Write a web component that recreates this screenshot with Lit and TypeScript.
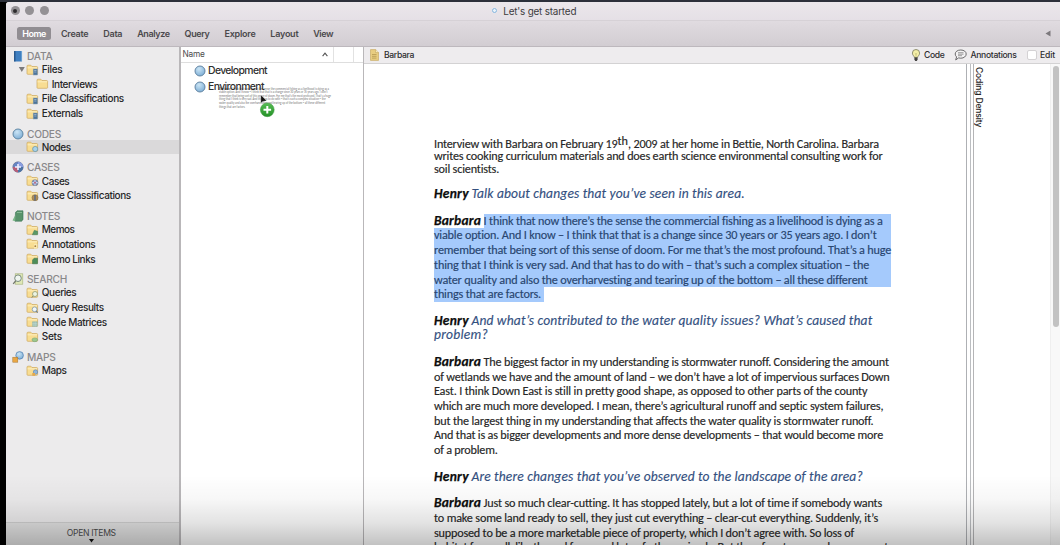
import { LitElement, html, css, svg, nothing } from "lit";
import { customElement, property } from "lit/decorators.js";

/** Text run tracked so that it spans exactly `w` pixels. */
@customElement("fit-text")
class FitText extends LitElement {
  @property({ type: Number }) w = 0;
  @property() text = "";
  static styles = css`
    :host { display: inline-block; white-space: pre; flex: none; }
    .run { display: inline-block; white-space: pre; }
  `;
  render() { return html`<span class="run">${this.text}</span>`; }
  updated() {
    const run = this.renderRoot.querySelector(".run") as HTMLElement;
    if (!this.w || !run) return;
    run.style.letterSpacing = "0px";
    const natural = parseFloat(getComputedStyle(run).width);
    run.style.letterSpacing = (this.w - natural) / this.text.length + "px";
  }
}

type Kind = "plain" | "name" | "ask";
interface Seg { k: Kind; t: string; w: number; sup?: boolean }
interface Para { cls: string; lines: Seg[][] }
const s = (t: string, w: number): Seg => ({ k: "plain", t, w });
const q = (t: string, w: number): Seg => ({ k: "ask", t, w });
const henry: Seg = { k: "name", t: "Henry", w: 34.8 };
const barbara: Seg = { k: "name", t: "Barbara", w: 47 };

const selected: Seg[][] = [
  [barbara, s("I think that now there’s the sense the commercial fishing as a livelihood is dying as a", 399)],
  [s("viable option. And I know – I think that that is a change since 30 years or 35 years ago. I don’t", 442.5)],
  [s("remember that being sort of this sense of doom. For me that’s the most profound. That’s a huge", 457)],
  [s("thing that I think is very sad. And that has to do with – that’s such a complex situation – the", 435)],
  [s("water quality and also the overharvesting and tearing up of the bottom – all these different", 433)],
  [s("things that are factors.", 107)],
];

const paras: Para[] = [
  { cls: "intro", lines: [
    [s("Interview with Barbara on February 19", 183.5), { k: "plain", t: "th", w: 10.5, sup: true }, s(", 2009 at her home in Bettie, North Carolina. Barbara", 250.5)],
    [s("writes cooking curriculum materials and does earth science environmental consulting work for", 448.5)],
    [s("soil scientists.", 65)],
  ] },
  { cls: "", lines: [[henry, q("Talk about changes that you’ve seen in this area.", 273.5)]] },
  { cls: "sel", lines: selected },
  { cls: "", lines: [
    [henry, q("And what’s contributed to the water quality issues? What’s caused that", 401)],
    [q("problem?", 54)],
  ] },
  { cls: "", lines: [
    [barbara, s("The biggest factor in my understanding is stormwater runoff. Considering the amount", 405)],
    [s("of wetlands we have and the amount of land – we don’t have a lot of impervious surfaces Down", 455.5)],
    [s("East. I think Down East is still in pretty good shape, as opposed to other parts of the county", 433)],
    [s("which are much more developed. I mean, there’s agricultural runoff and septic system failures,", 449)],
    [s("but the largest thing in my understanding that affects the water quality is stormwater runoff.", 439)],
    [s("And that is as bigger developments and more dense developments – that would become more", 449)],
    [s("of a problem.", 63.5)],
  ] },
  { cls: "", lines: [[henry, q("Are there changes that you’ve observed to the landscape of the area?", 391.5)]] },
  { cls: "", lines: [
    [barbara, s("Just so much clear-cutting. It has stopped lately, but a lot of time if somebody wants", 398)],
    [s("to make some land ready to sell, they just cut everything – clear-cut everything. Suddenly, it’s", 444)],
    [s("supposed to be a more marketable piece of property, which I don’t agree with. So loss of", 420)],
    [s("habitat for small, like the red foxes and lots of other animals. But therefore to many down you got", 454)],
  ] },
];

const renderLines = (lines: Seg[][]) => lines.map((l) => html`<div class="line">${l.map(
  (g) => html`<fit-text class="${g.k} ${g.sup ? "sup" : ""}" .w=${g.w} .text=${g.t}></fit-text>`)}</div>`);

const docStyles = css`
  .line { display: flex; height: 14.7px; line-height: 14.7px; align-items: baseline; width: 457px; }
  .plain { font: 12.2px/14.7px Carlito, Lato, sans-serif; color: #262626; -webkit-text-stroke: 0.15px; }
  .name { font: italic 800 13.5px/14.7px Carlito, Lato, sans-serif; color: #0c0c0c; margin-right: 2.6px; -webkit-text-stroke: 0.25px; }
  .ask { font: italic 13.5px/14.7px Carlito, Lato, sans-serif; color: #33507f; -webkit-text-stroke: 0.15px; }
  .sup { position: relative; top: -3px; }
`;

const folder = svg`
  <path d="M1 3.2q0-1 1-1h2.8l1.2 1.3h4.6q1 0 1 1v6q0 .8-.8.8H1.8q-.8 0-.8-.8z" fill="#f8dd92" stroke="#cda85b" stroke-width=".7"/>
  <path d="M1.5 4.8h9.6" stroke="#fdf0c4" stroke-width=".9"/>`;
const badges: Record<string, unknown> = {
  none: nothing,
  book: svg`<rect x="7.2" y="6" width="4.3" height="6" fill="#4d759c" stroke="#8aa0b0" stroke-width=".5"/><path d="M8.2 7.5h2.3M8.2 9h2.3" stroke="#c4d4e2" stroke-width=".6"/>`,
  node: svg`<circle cx="9.2" cy="9" r="2.6" fill="#a8d3ea" stroke="#6390ac" stroke-width=".7"/>`,
  case: svg`<circle cx="9" cy="8.7" r="3" fill="#8296c4" stroke="#6a7390" stroke-width=".6"/><path d="M9 5.9v5.6M6.2 8.7h5.6" stroke="#e3eef8" stroke-width=".9"/><circle cx="9" cy="8.7" r="1" fill="#b75f7c"/>`,
  ccase: svg`<circle cx="9" cy="8.7" r="3" fill="#b28f55" stroke="#7d6c54" stroke-width=".6"/><path d="M9 6v5.5" stroke="#4b648e" stroke-width="1.3"/>`,
  memo: svg`<path d="M6.3 11.8l2-4.5 3.3 1v3.5z" fill="#5a9868" stroke="#3c7450" stroke-width=".4"/>`,
  note: svg`<path d="M8 7h3.3v4.7H8z" fill="#f9e9b2"/><circle cx="9.3" cy="9.2" r=".9" fill="#a98040"/>`,
  link: svg`<path d="M6.5 11.8V8l1.6-1.8h3.4v5.6z" fill="#4c8d5a" stroke="#34704a" stroke-width=".5"/>`,
  query: svg`<circle cx="9" cy="8" r="2.5" fill="#edf4e4" stroke="#8d9a75" stroke-width=".8"/><path d="M7.2 10l-1.4 1.6" stroke="#748061" stroke-width="1"/>`,
  result: svg`<circle cx="8.6" cy="8.3" r="2.4" fill="#eef6fb" stroke="#7e97a8" stroke-width=".8"/><path d="M10.2 10l1.5 1.7" stroke="#66798c" stroke-width="1.1"/>`,
  matrix: svg`<rect x="6.3" y="6.5" width="5.2" height="5.2" fill="#8cb2a7"/><path d="M6.3 8.3h5.2M6.3 10h5.2M8 6.5v5.2M9.8 6.5v5.2" stroke="#d3e4df" stroke-width=".5"/>`,
  set: svg`<ellipse cx="8.8" cy="9.8" rx="2.8" ry="1.9" fill="#9cc88e" stroke="#6a9c72" stroke-width=".5"/>`,
  map: svg`<circle cx="9.5" cy="8" r="2.2" fill="#8eb5dc" stroke="#5c82ac" stroke-width=".6"/><rect x="6.3" y="9" width="2.8" height="2.8" fill="#e3a94e"/>`,
};
const heads: Record<string, unknown> = {
  DATA: svg`<rect x="2" y="1" width="8" height="10.4" rx=".6" fill="#3f7fc0"/><path d="M2.8 1v10.4" stroke="#244f80" stroke-width="1.2"/><path d="M9.6 1v10.4" stroke="#78abd8" stroke-width=".8"/>`,
  CODES: svg`<circle cx="6" cy="6" r="5" fill="url(#ball)" stroke="#577f9d" stroke-width=".9"/>`,
  CASES: svg`<circle cx="6" cy="6" r="5.2" fill="#6585c4" stroke="#63698a" stroke-width=".6"/><path d="M6 6V.8A5.2 5.2 0 0 1 11.2 6z" fill="#8a9ee0"/><path d="M6 6h5.2A5.2 5.2 0 0 1 6 11.2z" fill="#4d74a4"/><path d="M6 6v5.2A5.2 5.2 0 0 1 .8 6z" fill="#b95f77"/><path d="M6 3v6M3 6h6" stroke="#eef" stroke-width="1.6"/>`,
  NOTES: svg`<path d="M3.5 2.5L5 .8h6v8.5l-1.3 1.9H3z" fill="#58936b" stroke="#3b7454" stroke-width=".6"/><path d="M.5 10.5L3.3 5v6.2z" fill="#79b787"/><path d="M5 2.5h5" stroke="#94c4a0" stroke-width=".8"/>`,
  SEARCH: svg`<rect x="3.2" y=".8" width="7.6" height="10.4" fill="#dfe8b6" stroke="#a3b078" stroke-width=".6"/><circle cx="6" cy="5.2" r="3.3" fill="#eff5ef" stroke="#6c7f75" stroke-width=".9"/><path d="M3.7 7.8L1.2 10.8" stroke="#71776b" stroke-width="1.3"/>`,
  MAPS: svg`<circle cx="7.6" cy="4.4" r="3.8" fill="url(#ball)" stroke="#4f7eb0" stroke-width=".7"/><rect x=".8" y="6.2" width="5" height="5" fill="#e9a744" stroke="#a47633" stroke-width=".5"/>`,
};
const ball = svg`<defs><radialGradient id="ball" cx=".4" cy=".3" r=".8"><stop offset="0" stop-color="#cbe5f5"/><stop offset="1" stop-color="#75a8d2"/></radialGradient></defs>`;

interface Item { t: string; w: number; b: string; deep?: boolean; open?: boolean; on?: boolean }
const groups: { t: string; w: number; items: Item[] }[] = [
  { t: "DATA", w: 25.5, items: [
    { t: "Files", w: 20.5, b: "book", open: true }, { t: "Interviews", w: 45.5, b: "none", deep: true },
    { t: "File Classifications", w: 82, b: "book" }, { t: "Externals", w: 41, b: "book" }] },
  { t: "CODES", w: 34, items: [{ t: "Nodes", w: 29, b: "node", on: true }] },
  { t: "CASES", w: 32.5, items: [{ t: "Cases", w: 27.5, b: "case" }, { t: "Case Classifications", w: 89, b: "ccase" }] },
  { t: "NOTES", w: 33, items: [{ t: "Memos", w: 32.5, b: "memo" }, { t: "Annotations", w: 53.5, b: "note" }, { t: "Memo Links", w: 53.5, b: "link" }] },
  { t: "SEARCH", w: 40, items: [{ t: "Queries", w: 34.5, b: "query" }, { t: "Query Results", w: 62, b: "result" },
    { t: "Node Matrices", w: 65, b: "matrix" }, { t: "Sets", w: 20, b: "set" }] },
  { t: "MAPS", w: 28.5, items: [{ t: "Maps", w: 24.5, b: "map" }] },
];

@customElement("nav-pane")
class NavPane extends LitElement {
  static styles = css`
    :host { display: flex; flex-direction: column; background: #ecebec; font-family: Inter, Roboto, sans-serif; }
    .tree { flex: 1; display: flex; flex-direction: column; gap: 7.2px; padding-top: 2.9px; }
    .head { display: flex; align-items: center; gap: 3px; height: 12px; padding-left: 6.5px; font-size: 10.2px; font-weight: 500; color: #89888a; line-height: 12px; }
    .item { display: flex; align-items: center; height: 14.65px; padding-left: 20.8px; gap: 2.5px; font-size: 10px; font-weight: 500; line-height: 14px; color: #262627; }
    .deep { padding-left: 30.8px; }
    .open { padding-left: 12.3px; }
    .open .tri { margin-right: -1.5px; }
    .on { background: #dad9da; }
    .foot { height: 23px; border-top: 1px solid #cfcfcf; background: #e2e2e2; display: flex; flex-direction: column; align-items: center; padding: 4px 2px 0 0; box-sizing: border-box; font-size: 8.6px; line-height: 12px; color: #4c4c4c; }
    svg { display: block; flex: none; }
  `;
  render() {
    return html`
      <div class="tree">${groups.map((g) => html`<div>
        <div class="head"><svg width="12" height="12" viewBox="0 0 12 12">${ball}${heads[g.t]}</svg><fit-text .w=${g.w} .text=${g.t}></fit-text></div>
        ${g.items.map((i) => html`<div class="item ${i.deep ? "deep" : ""} ${i.open ? "open" : ""} ${i.on ? "on" : ""}">
          ${i.open ? html`<svg class="tri" width="7.5" height="7" viewBox="0 0 7.5 7"><path d="M.8 1h6L3.8 6z" fill="#7b7a7c"/></svg>` : nothing}
          <svg width="13" height="13" viewBox="0 0 13 13">${folder}${badges[i.b]}</svg>
          <fit-text .w=${i.w} .text=${i.t}></fit-text></div>`)}
      </div>`)}</div>
      <div class="foot"><fit-text .w=${49} .text=${"OPEN ITEMS"}></fit-text>
        <svg width="5" height="4" viewBox="0 0 5 4"><path d="M0 0h5L2.5 3.6z" fill="#111"/></svg></div>`;
  }
}

@customElement("list-pane")
class ListPane extends LitElement {
  static styles = [docStyles, css`
    :host { display: block; position: relative; background: #fff; font-family: Inter, Roboto, sans-serif; }
    .cols { display: flex; height: 15px; border-bottom: 1px solid #dedede; font-size: 8.3px; line-height: 15px; color: #4d4d4d; padding-left: 2px; }
    .sort { margin-left: auto; margin-right: 4.5px; align-self: center; }
    .sep { width: 19px; border-left: 1px solid #e2e2e2; }
    .last { width: 9px; }
    .row { display: flex; align-items: center; height: 16.2px; gap: 2.5px; padding-left: 13px; font-size: 10.4px; font-weight: 500; color: #2f2f2f; line-height: 16px; }
    .ghost { position: absolute; left: 38.5px; top: 39.5px; transform: scale(.245); transform-origin: 0 0; opacity: .55; }
    .cursor { position: absolute; left: 77px; top: 46px; }
    svg { display: block; flex: none; }
  `];
  render() {
    const dot = html`<svg width="12" height="12" viewBox="0 0 12 12">${ball}<circle cx="6" cy="6" r="5" fill="url(#ball)" stroke="#5a7d9c" stroke-width=".9"/></svg>`;
    return html`
      <div class="cols"><fit-text .w=${22} .text=${"Name"}></fit-text>
        <svg class="sort" width="6" height="5" viewBox="0 0 6 5"><path d="M.6 4.2L3 1.2l2.4 3" fill="none" stroke="#555" stroke-width="1.1"/></svg>
        <span class="sep"></span><span class="sep last"></span></div>
      <div class="row">${dot}<fit-text .w=${59} .text=${"Development"}></fit-text></div>
      <div class="row">${dot}<fit-text .w=${56} .text=${"Environment"}></fit-text></div>
      <div class="ghost">${renderLines(selected)}</div>
      <svg class="cursor" width="20" height="26" viewBox="0 0 20 26">
        <defs><linearGradient id="g" x2="0" y2="1"><stop offset="0" stop-color="#58bd55"/><stop offset="1" stop-color="#249127"/></linearGradient></defs>
        <path d="M2.8 2v8l2-1.6 3.8-.6z" fill="#111" stroke="#fff" stroke-width=".3"/>
        <circle cx="9.3" cy="16.8" r="6.9" fill="url(#g)" stroke="#349137" stroke-width=".5"/>
        <path d="M9.3 13v7.6M5.5 16.8h7.6" stroke="#fff" stroke-width="2"/></svg>`;
  }
}

@customElement("doc-pane")
class DocPane extends LitElement {
  static styles = [docStyles, css`
    :host { display: flex; flex-direction: column; background: #fff; font-family: Inter, Roboto, sans-serif; overflow: hidden; }
    .bar { flex: none; display: flex; align-items: center; height: 17px; background: #eeecee; border-bottom: 1px solid #d3d2d3; box-sizing: border-box; font-size: 8.6px; font-weight: 500; color: #2d2c2e; padding: 0 5px 0 6px; }
    .title { margin-left: 5px; margin-right: auto; }
    .code { margin-left: 3.5px; }
    .balloon { margin-left: 9.5px; }
    .ann { margin-left: 3.5px; }
    .box { width: 8px; height: 8px; background: #fff; border: .5px solid #d4d2d4; border-radius: 2px; margin: 0 3.5px 0 10px; }
    .body { flex: 1; min-height: 0; display: flex; }
    .page { width: 602px; box-sizing: border-box; padding: 73.5px 0 0 70px; display: flex; flex-direction: column; gap: 11.9px; overflow: hidden; flex: none; }
    .para { flex: none; }
    .intro .line, .intro .plain { height: 12.6px; line-height: 12.6px; }
    .sel .plain { background: #a5cafc; color: #28456f; height: 14.8px; flex: 1; }
    .sel .line:last-child .plain { flex: none; padding-right: 3px; }
    .rails { width: 8px; flex: none; box-sizing: border-box; border-left: 1px solid #aeb0b4; border-right: 1.5px solid #b4b4b6; display: flex; justify-content: center; }
    .rails i { width: 1px; background: #bcbec1; margin-left: 1px; }
    .density { flex: 1; }
    .vert { writing-mode: vertical-rl; font-size: 8.5px; font-weight: 500; line-height: 10px; color: #222; margin-top: 3px; display: block; width: 10px; letter-spacing: -.14px; }
    .track { width: 10px; background: #f8f8f8; border-left: 1px solid #efefef; box-sizing: border-box; padding: 2px 0 0 2px; }
    .thumb { width: 6px; height: 261px; border-radius: 3px; background: #c2c2c2; }
    svg { display: block; flex: none; }
  `];
  render() {
    return html`
      <div class="bar">
        <svg width="9" height="12" viewBox="0 0 9 12"><path d="M.5.6h5.2l2.8 2.8v8H.5z" fill="#e8cd80" stroke="#c3a45c" stroke-width=".6"/><path d="M5.6.6v3h2.9" fill="#faefc4" stroke="#b99a55" stroke-width=".5"/><path d="M2 5.5h4.5M2 7.3h4.5M2 9.1h4.5" stroke="#ae9149" stroke-width=".7"/></svg>
        <fit-text class="title" .w=${30} .text=${"Barbara"}></fit-text>
        <svg width="10" height="13" viewBox="0 0 10 13"><path d="M3.4 8.5C3.3 7 1.4 6.3 1.4 4.1a3.6 3.6 0 0 1 7.2 0c0 2.2-1.9 2.9-2 4.4z" fill="#f4efa8" stroke="#77775b" stroke-width=".8"/><path d="M5 8V5M3.8 4.2L5 5.2l1.2-1" fill="none" stroke="#aaa35c" stroke-width=".5"/><path d="M3.4 8.6h3.2v2L5.8 12H4.2l-.8-1.4z" fill="#434340"/></svg>
        <fit-text class="code" .w=${20.5} .text=${"Code"}></fit-text>
        <svg class="balloon" width="13" height="12" viewBox="0 0 13 12"><path d="M6.8 1c3.2 0 5.4 1.7 5.4 4S10 9.2 6.8 9.2c-.8 0-1.500-.1-2.200-.3L1.700 10.900l.9-3C1.700 7.200 1.200 6.200 1.200 5 1.200 2.700 3.500 1 6.800 1z" fill="#f3f2f3" stroke="#5c5b5d" stroke-width=".9"/><path d="M4 3.700h5.500M4 5.200h5.500M4 6.700h4" stroke="#777" stroke-width=".7"/></svg>
        <fit-text class="ann" .w=${46} .text=${"Annotations"}></fit-text>
        <span class="box"></span><fit-text .w=${15} .text=${"Edit"}></fit-text>
      </div>
      <div class="body">
        <div class="page">${paras.map((p) => html`<div class="para ${p.cls}">${renderLines(p.lines)}</div>`)}</div>
        <div class="rails"><i></i></div>
        <div class="density"><span class="vert">Coding Density</span></div>
        <div class="track"><div class="thumb"></div></div>
      </div>`;
  }
}

const tabs: [string, number][] = [["Create", 27.5], ["Data", 19], ["Analyze", 32.5], ["Query", 25], ["Explore", 31], ["Layout", 28], ["View", 20]];

@customElement("app-root")
class AppRoot extends LitElement {
  static styles = css`
    :host { display: block; position: relative; width: 1060px; height: 545px; overflow: hidden; background: #000; font-family: Inter, Roboto, sans-serif; }
    .frame { height: 545px; box-sizing: border-box; border-top: 2px solid #2c303a; display: flex; flex-direction: column; }
    .win { flex: 1; min-height: 0; margin-left: 5.5px; display: flex; flex-direction: column; background: #e6e2e6; border-radius: 3px 0 0 0; overflow: hidden; }
    .titlebar { height: 18px; flex: none; display: grid; grid-template-columns: 1fr auto 1fr; align-items: center; background: linear-gradient(#ebe7eb, #e5e0e6); border-bottom: 1px solid #d6d1d6; padding-left: 5px; }
    .lights { display: flex; gap: 5.6px; margin-top: -1px; }
    .lights i { width: 9px; height: 9px; border-radius: 50%; background: #949195; display: grid; place-items: center; }
    .lights i:first-child::after { content: ""; width: 4px; height: 4px; border-radius: 50%; background: #2c2b2d; }
    .name { display: flex; align-items: center; gap: 6px; font-size: 9.9px; color: #3c3b3d; line-height: 16px; margin: -1px 2px 0 0; }
    .ring { width: 3px; height: 3px; border: 1.3px solid #87b7df; border-radius: 50%; background: #eaf4fb; }
    .tools { height: 25px; flex: none; display: flex; align-items: center; gap: 14.9px; padding: 0 9px 0 11.5px; background: linear-gradient(#e0dbe0, #d2cdd2); border-bottom: 1px solid #bdb8bd; font-size: 9px; font-weight: 600; color: #4b494c; }
    .home { width: 34px; height: 13px; line-height: 13px; border-radius: 2.5px; background: #918d92; color: #fff; text-align: center; margin-right: -5px; }
    .back { margin-left: auto; }
    .main { flex: 1; min-height: 0; display: grid; grid-template-columns: 173.5px 182px 1fr; column-gap: 1.5px; background: #b9b7b9; }
    .main > * { min-height: 0; min-width: 0; }
    .shade { position: absolute; left: 0; right: 0; bottom: 0; height: 70px; background: linear-gradient(rgba(0,0,0,0), rgba(0,0,0,.03) 35%, rgba(0,0,0,.11) 68%, rgba(0,0,0,.24)); pointer-events: none; }
  `;
  render() {
    return html`
      <div class="frame"><div class="win">
        <div class="titlebar">
          <div class="lights"><i></i><i></i><i></i></div>
          <div class="name"><span class="ring"></span><fit-text .w=${73} .text=${"Let's get started"}></fit-text></div>
        </div>
        <div class="tools">
          <span class="home"><fit-text .w=${23.5} .text=${"Home"}></fit-text></span>
          ${tabs.map(([t, w]) => html`<fit-text .w=${w} .text=${t}></fit-text>`)}
          <svg class="back" width="6" height="7" viewBox="0 0 6 7"><path d="M5.500.5v6L.5 3.500z" fill="#7c797d"/></svg>
        </div>
        <div class="main"><nav-pane></nav-pane><list-pane></list-pane><doc-pane></doc-pane></div>
      </div></div>
      <div class="shade"></div>`;
  }
}
